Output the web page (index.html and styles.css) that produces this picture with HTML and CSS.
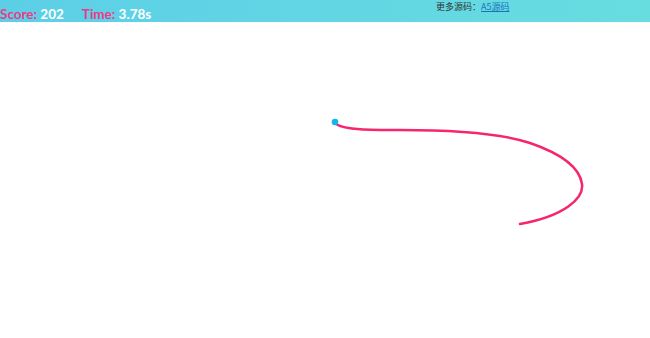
FILE: index.html
```html
<!DOCTYPE html>
<html lang="zh-CN">
<head>
    <meta charset="UTF-8">
    <title>Curve</title>
    <link rel="stylesheet" href="styles.css">
</head>
<body>
    <div class="topbar">
        <div class="stats">
            <span class="stat"><span class="label">Score:</span> <span class="value">202</span></span>
            <span class="stat"><span class="label">Time:</span> <span class="value">3.78s</span></span>
        </div>
        <div class="more">更多源码：<a href="#">A5源码</a></div>
    </div>

    <div class="board">
        <svg width="650" height="316" viewBox="0 22 650 316">
            <path d="M336 124 C345 130 370 130 400 130 C450 130 500 133 530 143 C565 155 580 170 582 184 C584 198 565 216 520 224"
                  fill="none" stroke="#f5256f" stroke-width="2.5" stroke-linecap="round"/>
            <circle cx="335" cy="122" r="3.3" fill="#12b5f0"/>
        </svg>
    </div>
</body>
</html>
```

FILE: styles.css
```css
* {
    margin: 0;
    padding: 0;
    box-sizing: border-box;
}

body {
    font-family: 'Liberation Sans', Arial, sans-serif;
    background: #fff;
    overflow: hidden;
}

.topbar {
    height: 22px;
    background: linear-gradient(90deg, #5ccfe7 0%, #67dde0 100%);
    display: flex;
    justify-content: space-between;
}

.stats {
    display: flex;
    gap: 18px;
    padding-top: 6px;
    font-family: Lato, 'DejaVu Sans', sans-serif;
    font-weight: 700;
    font-size: 13.5px;
    line-height: 16px;
}

.label {
    color: #ec3b86;
}

.value {
    color: #fff;
}

.more {
    width: 214px;
    padding-top: 1px;
    font-size: 9px;
    line-height: 12px;
    color: #333;
    font-family: 'Noto Sans CJK SC', sans-serif;
}

.more a {
    color: #1a73b8;
}

.board svg {
    display: block;
}
```
